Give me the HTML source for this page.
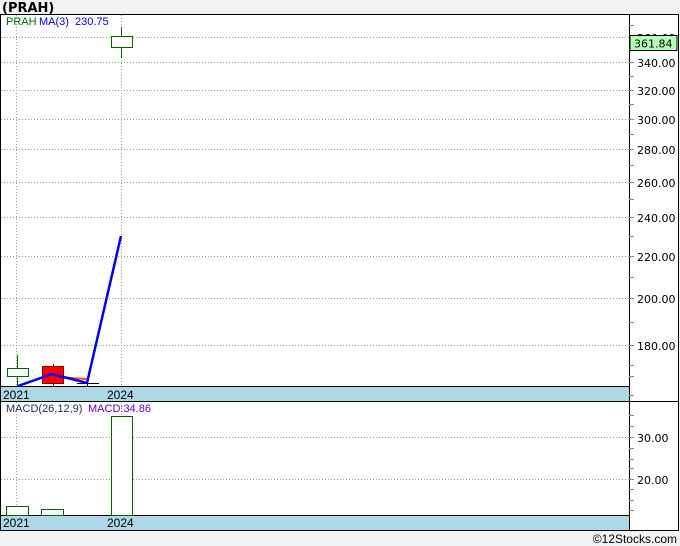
<!DOCTYPE html>
<html><head><meta charset="utf-8"><style>
html,body{margin:0;padding:0;background:#f2f2f2;width:680px;height:546px;overflow:hidden}
svg{display:block;font-family:"Liberation Sans","DejaVu Sans",sans-serif}
</style></head><body>
<svg width="680" height="546" xmlns="http://www.w3.org/2000/svg">
<text x="2" y="12" font-size="13" font-weight="bold" fill="#000" font-family="DejaVu Sans, sans-serif">(PRAH)</text>
<rect x="0.5" y="14.5" width="678" height="516" fill="#fff" stroke="#000"/>
<rect x="1" y="387" width="628" height="15" fill="#add8e6"/>
<line x1="0" y1="386.5" x2="629" y2="386.5" stroke="#000"/>
<line x1="0" y1="401.5" x2="679" y2="401.5" stroke="#000"/>
<rect x="1" y="516" width="628" height="14" fill="#add8e6"/>
<line x1="0" y1="515.5" x2="629" y2="515.5" stroke="#000"/>
<line x1="629.5" y1="14" x2="629.5" y2="531" stroke="#000"/>
<g stroke="#999" stroke-dasharray="1,2" stroke-width="1">
<line x1="16.5" y1="15" x2="16.5" y2="386"/><line x1="121.5" y1="15" x2="121.5" y2="386"/>
<line x1="16.5" y1="402" x2="16.5" y2="515"/><line x1="121.5" y1="402" x2="121.5" y2="515"/>
<line x1="1" y1="37.5" x2="629" y2="37.5"/><line x1="1" y1="62.5" x2="629" y2="62.5"/>
<line x1="1" y1="90.5" x2="629" y2="90.5"/><line x1="1" y1="119.5" x2="629" y2="119.5"/>
<line x1="1" y1="149.5" x2="629" y2="149.5"/><line x1="1" y1="182.5" x2="629" y2="182.5"/>
<line x1="1" y1="217.5" x2="629" y2="217.5"/><line x1="1" y1="256.5" x2="629" y2="256.5"/>
<line x1="1" y1="298.5" x2="629" y2="298.5"/><line x1="1" y1="345.5" x2="629" y2="345.5"/>
<line x1="1" y1="437.5" x2="629" y2="437.5"/><line x1="1" y1="479.5" x2="629" y2="479.5"/>
</g>
<g stroke="#888">
<line x1="629" y1="25.5" x2="634" y2="25.5"/><line x1="629" y1="49.5" x2="634" y2="49.5"/>
<line x1="629" y1="76.5" x2="634" y2="76.5"/><line x1="629" y1="104.5" x2="634" y2="104.5"/>
<line x1="629" y1="134.5" x2="634" y2="134.5"/><line x1="629" y1="165.5" x2="634" y2="165.5"/>
<line x1="629" y1="199.5" x2="634" y2="199.5"/><line x1="629" y1="236.5" x2="634" y2="236.5"/>
<line x1="629" y1="277.5" x2="634" y2="277.5"/><line x1="629" y1="322.5" x2="634" y2="322.5"/>
<line x1="629" y1="365.5" x2="634" y2="365.5"/><line x1="629" y1="376.5" x2="634" y2="376.5"/>
<line x1="629" y1="395.5" x2="634" y2="395.5"/>
<line x1="629" y1="415.5" x2="634" y2="415.5"/><line x1="629" y1="426.5" x2="634" y2="426.5"/>
<line x1="629" y1="448.5" x2="634" y2="448.5"/><line x1="629" y1="459.5" x2="634" y2="459.5"/>
<line x1="629" y1="468.5" x2="634" y2="468.5"/><line x1="629" y1="489.5" x2="634" y2="489.5"/>
<line x1="629" y1="500.5" x2="634" y2="500.5"/><line x1="629" y1="510.5" x2="634" y2="510.5"/>
<line x1="629" y1="437.5" x2="634" y2="437.5"/><line x1="629" y1="479.5" x2="634" y2="479.5"/>
<line x1="629" y1="62.5" x2="634" y2="62.5"/><line x1="629" y1="90.5" x2="634" y2="90.5"/>
<line x1="629" y1="119.5" x2="634" y2="119.5"/><line x1="629" y1="149.5" x2="634" y2="149.5"/>
<line x1="629" y1="182.5" x2="634" y2="182.5"/><line x1="629" y1="217.5" x2="634" y2="217.5"/>
<line x1="629" y1="256.5" x2="634" y2="256.5"/><line x1="629" y1="298.5" x2="634" y2="298.5"/>
<line x1="629" y1="345.5" x2="634" y2="345.5"/>
</g>
<g font-size="11" fill="#000" font-family="DejaVu Sans, sans-serif">
<text x="637" y="42">360.00</text><text x="637" y="67">340.00</text>
<text x="637" y="95">320.00</text><text x="637" y="124">300.00</text>
<text x="637" y="154">280.00</text><text x="637" y="187">260.00</text>
<text x="637" y="222">240.00</text><text x="637" y="261">220.00</text>
<text x="637" y="303">200.00</text><text x="637" y="350">180.00</text>
<text x="637" y="442">30.00</text><text x="637" y="484">20.00</text>
</g>
<rect x="630" y="35.5" width="47" height="15" fill="#b3ffb3" stroke="#000"/>
<text x="634" y="47.5" font-size="11" fill="#000" font-family="DejaVu Sans, sans-serif">361.84</text>
<g stroke="#006400" fill="#fff">
<line x1="17.5" y1="355" x2="17.5" y2="386"/><rect x="7.5" y="368.5" width="21" height="8"/>
<line x1="121.5" y1="27" x2="121.5" y2="58"/><rect x="111.5" y="36.5" width="21" height="11"/>
</g>
<line x1="53.5" y1="364" x2="53.5" y2="386" stroke="#800"/>
<rect x="42.5" y="366.5" width="21" height="17" fill="#f00" stroke="#800"/>
<line x1="77" y1="383.5" x2="99" y2="383.5" stroke="#000"/>
<line x1="87.5" y1="378" x2="87.5" y2="386" stroke="#000"/>
<polyline points="63,377.5 87,379" fill="none" stroke="#f44" stroke-width="2"/>
<polyline points="18,386 52,374 87,383 121,236" fill="none" stroke="#0000ee" stroke-width="2.5"/>
<g stroke="#006400" fill="#fff">
<rect x="6.5" y="506.5" width="22" height="9"/>
<rect x="41.5" y="509.5" width="22" height="6"/>
<rect x="111.5" y="416.5" width="21" height="99"/>
</g>
<text x="6" y="25" font-size="11" fill="#006400">PRAH</text>
<text x="39" y="25" font-size="11" fill="#0000ee">MA(3)</text>
<text x="75" y="25" font-size="11" fill="#0000ee">230.75</text>
<text x="6" y="412" font-size="11" fill="#2a2a6a">MACD(26,12,9)</text>
<text x="88" y="412" font-size="11" fill="#6a00c8">MACD:34.86</text>
<g font-size="12" fill="#000">
<text x="3" y="399">2021</text><text x="107" y="399">2024</text>
<text x="3" y="527">2021</text><text x="107" y="527">2024</text>
</g>
<text x="677" y="543" font-size="12" fill="#000" text-anchor="end">©12Stocks.com</text>
</svg>
</body></html>
